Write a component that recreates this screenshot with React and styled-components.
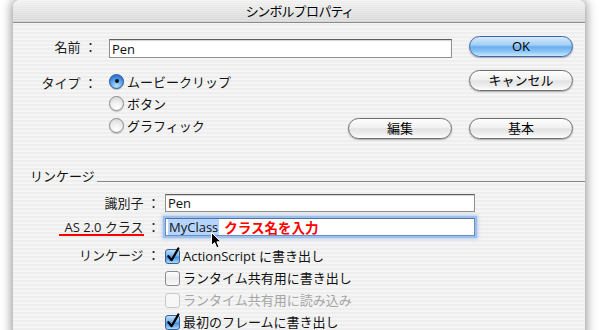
import styled, { createGlobalStyle } from "styled-components";

const GlobalStyle = createGlobalStyle`
  html, body {
    margin: 0;
    padding: 0;
    background: #fff;
  }
  body {
    font-family: "Open Sans", "Noto Sans CJK JP", sans-serif;
    font-size: 13px;
    color: #111;
  }
`;

const Page = styled.div`
  width: 600px;
  height: 330px;
  overflow: hidden;
  box-sizing: border-box;
  padding: 0 15px 0 13px;
  background: #fff;
`;

const Window = styled.div`
  min-height: 360px;
  border-radius: 7px 7px 0 0;
  box-shadow: 0 0 11px 1px rgba(0, 0, 0, 0.45);
  background: repeating-linear-gradient(#eeeeee 0 2px, #f5f5f5 2px 4px);
  overflow: hidden;
`;

const TitleBar = styled.div`
  height: 22px;
  border-bottom: 1px solid #8c8c8c;
  background: repeating-linear-gradient(rgba(255, 255, 255, 0.25) 0 1px, transparent 1px 2px),
    linear-gradient(#f1f1f1, #d6d6d6);
  text-align: center;
  line-height: 22px;
  font-size: 13px;
  font-feature-settings: "palt";
  color: #000;
`;

const Content = styled.div`
  padding-top: 13px;
`;

const TopGrid = styled.div`
  display: grid;
  grid-template-columns: 84px 343px 109px;
  column-gap: 12px;
  row-gap: 12px;
`;

const Label = styled.div`
  text-align: right;
  line-height: ${p => p.$h || 22}px;
  margin-top: ${p => p.$top || 0}px;
  color: #1b1b1b;
  white-space: nowrap;
`;

const TextField = styled.div`
  position: relative;
  box-sizing: border-box;
  height: ${p => p.$h || 18}px;
  margin-top: ${p => p.$top || 0}px;
  display: flex;
  align-items: center;
  padding-left: 2px;
  background: #fff;
  border: 1px solid ${p => (p.$focus ? "#6d8fc2" : "#8f8f8f")};
  border-top-color: ${p => (p.$focus ? "#52729f" : "#5e5e5e")};
  box-shadow: ${p =>
    p.$focus
      ? "0 0 0 2px #9cc0ec, 0 0 3px 3px rgba(120, 165, 225, 0.5)"
      : "inset 0 1px 1px rgba(0, 0, 0, 0.18)"};
  line-height: 16px;
  white-space: nowrap;
`;

const Selected = styled.span`
  background: #b5d5fe;
  align-self: stretch;
  display: flex;
  align-items: center;
  padding: 0 1px;
`;

const Hint = styled.span`
  margin-left: 5px;
  color: #f00;
  font-weight: bold;
  font-size: 13.5px;
  font-family: "Noto Sans CJK JP", sans-serif;
`;

const Pointer = styled.svg`
  position: absolute;
  left: 45px;
  top: 13px;
  overflow: visible;
`;

const PushButton = styled.div`
  justify-self: end;
  box-sizing: border-box;
  width: 104px;
  height: 21px;
  border-radius: 11px;
  border: 1px solid ${p => (p.$primary ? "#3e64a8" : "#6e6e6e")};
  background: ${p =>
    p.$primary
      ? "linear-gradient(#d6ebfc 0%, #a3cff4 42%, #6aaeee 52%, #8ec8f8 78%, #c9eaff 100%)"
      : "linear-gradient(#fefefe 0%, #f1f1f1 45%, #e3e3e3 52%, #efefef 80%, #ffffff 100%)"};
  box-shadow: 0 1px 1.5px rgba(0, 0, 0, 0.3);
  text-align: center;
  line-height: 19px;
  color: #000;
`;

const TypeArea = styled.div`
  display: flex;
  justify-content: space-between;
  align-items: flex-end;
`;

const RadioList = styled.div`
  align-self: flex-start;
  display: flex;
  flex-direction: column;
`;

const RadioRow = styled.div`
  height: 22px;
  display: flex;
  align-items: center;
  gap: 3px;
  font-family: "Noto Sans CJK JP", sans-serif;
`;

const RadioMark = styled.span`
  position: relative;
  box-sizing: border-box;
  width: 15px;
  height: 15px;
  border-radius: 50%;
  border: 1px solid ${p => (p.$on ? "#3f5f96" : "#8a8a8a")};
  background: ${p =>
    p.$on
      ? "radial-gradient(circle at 50% 85%, #b9e2ff 0%, #5fa7ec 45%, #2f7bd8 75%), #4a8fe0"
      : "radial-gradient(circle at 50% 85%, #ffffff 0%, #f0f0f0 45%, #d8d8d8 90%)"};
  box-shadow: 0 1px 1px rgba(0, 0, 0, 0.2);

  &::after {
    content: "";
    display: ${p => (p.$on ? "block" : "none")};
    position: absolute;
    left: 4.5px;
    top: 4.5px;
    width: 4px;
    height: 4px;
    border-radius: 50%;
    background: #111;
  }
`;

const ButtonColumn = styled.div`
  height: 69px;
  display: flex;
  flex-direction: column;
  justify-content: space-between;
  align-items: flex-end;
`;

const SectionHeader = styled.div`
  margin-top: 29px;
  padding-left: 17px;
  display: flex;
  align-items: flex-end;
  line-height: 16px;
  font-family: "Noto Sans CJK JP", sans-serif;
`;

const Rule = styled.div`
  flex: 1;
  margin: 0 0 2px 2px;
  border-top: 1px solid #8a8a8a;
`;

const LinkGrid = styled.div`
  margin-top: 10px;
  display: grid;
  grid-template-columns: 147px 310px;
  column-gap: 5px;
  row-gap: 6px;
`;

const Marked = styled.span`
  display: inline-block;
  line-height: 14px;
  padding-left: 5px;
  border-bottom: 2px solid #f00;
`;

const CheckList = styled.div`
  margin-top: 2px;
  display: flex;
  flex-direction: column;
`;

const CheckRow = styled.div`
  height: 22px;
  display: flex;
  align-items: center;
  gap: 2px;
  color: ${p => (p.$disabled ? "#a5a5a5" : "#111")};
  white-space: nowrap;
`;

const CheckSvg = styled.svg`
  flex: none;
  overflow: visible;
`;

const CheckBox = ({ checked, disabled }) => (
  <CheckSvg width="16" height="18" viewBox="0 0 16 18">
    <defs>
      <linearGradient id="cb-on" x1="0" y1="0" x2="0" y2="1">
        <stop offset="0" stopColor="#c4e2fb" />
        <stop offset="0.45" stopColor="#75b4ef" />
        <stop offset="0.55" stopColor="#418fe2" />
        <stop offset="1" stopColor="#b3e0ff" />
      </linearGradient>
      <linearGradient id="cb-off" x1="0" y1="0" x2="0" y2="1">
        <stop offset="0" stopColor="#ffffff" />
        <stop offset="0.5" stopColor="#ececec" />
        <stop offset="1" stopColor="#fbfbfb" />
      </linearGradient>
    </defs>
    <rect
      x="0.5"
      y="3.5"
      width="14"
      height="14"
      rx="2.5"
      fill={checked ? "url(#cb-on)" : disabled ? "#f7f7f7" : "url(#cb-off)"}
      stroke={checked ? "#3d5e97" : disabled ? "#c9c9c9" : "#8a8a8a"}
    />
    {checked && (
      <path
        d="M3.4 10.2 L6.6 14.2 L13.4 2.4"
        fill="none"
        stroke="#000"
        strokeWidth="2.2"
        strokeLinecap="round"
        strokeLinejoin="round"
      />
    )}
  </CheckSvg>
);

const Radio = ({ on, children }) => (
  <RadioRow>
    <RadioMark $on={on} />
    {children}
  </RadioRow>
);

const exports = [
  { text: "ActionScript に書き出し", checked: true },
  { text: "ランタイム共有用に書き出し" },
  { text: "ランタイム共有用に読み込み", disabled: true },
  { text: "最初のフレームに書き出し", checked: true },
];

export default function App() {
  return (
    <>
      <GlobalStyle />
      <Page>
        <Window>
          <TitleBar>シンボルプロパティ</TitleBar>
          <Content>
            <TopGrid>
              <Label>名前 ：</Label>
              <TextField $h={19} $top={3}>Pen</TextField>
              <PushButton $primary>OK</PushButton>

              <Label $top={2}>タイプ ：</Label>
              <TypeArea>
                <RadioList>
                  <Radio on>ムービークリップ</Radio>
                  <Radio>ボタン</Radio>
                  <Radio>グラフィック</Radio>
                </RadioList>
                <PushButton>編集</PushButton>
              </TypeArea>
              <ButtonColumn>
                <PushButton>キャンセル</PushButton>
                <PushButton>基本</PushButton>
              </ButtonColumn>
            </TopGrid>

            <SectionHeader>
              リンケージ
              <Rule />
            </SectionHeader>

            <LinkGrid>
              <Label $h={18}>識別子 ：</Label>
              <TextField>Pen</TextField>

              <Label $h={18}>
                <Marked>AS 2.0 クラス</Marked> ：
              </Label>
              <TextField $focus>
                <Selected>MyClass</Selected>
                <Hint>クラス名を入力</Hint>
                <Pointer width="11" height="17" viewBox="0 0 11 17">
                  <path
                    d="M0.5 0.5 L0.5 13.5 L3.6 10.6 L5.8 15.8 L8 14.9 L5.9 9.8 L10 9.8 Z"
                    fill="#000"
                    stroke="#fff"
                    strokeWidth="1"
                    strokeLinejoin="round"
                  />
                </Pointer>
              </TextField>

              <Label $top={2}>リンケージ ：</Label>
              <CheckList>
                {exports.map(item => (
                  <CheckRow key={item.text} $disabled={item.disabled}>
                    <CheckBox checked={item.checked} disabled={item.disabled} />
                    {item.text}
                  </CheckRow>
                ))}
              </CheckList>
            </LinkGrid>
          </Content>
        </Window>
      </Page>
    </>
  );
}
